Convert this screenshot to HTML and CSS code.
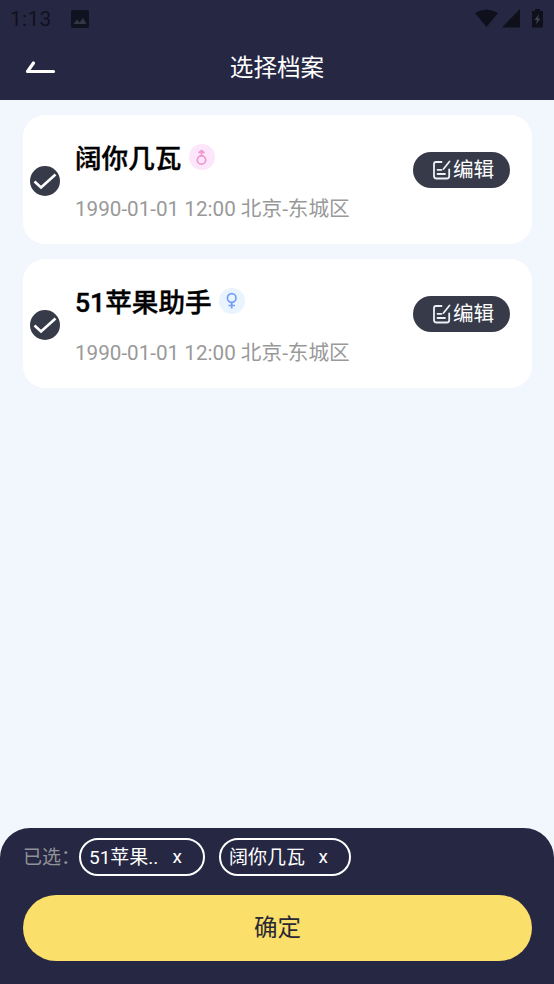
FILE: index.html
```html
<!DOCTYPE html>
<html lang="zh-CN">
<head>
<meta charset="utf-8">
<title>选择档案</title>
<link rel="stylesheet" href="styles.css">
</head>
<body>
<header class="header">
  <div class="status">
    <span class="time">1:13</span>
    <svg class="photo" width="18" height="18" viewBox="0 0 18 18"><rect width="18" height="18" rx="2" fill="#11121f"/><path d="M2.500 14 6 9.500l2.500 3 3.500-4.500L15.500 14z" fill="#343547"/></svg>
    <svg class="signals" width="72" height="20" viewBox="0 0 72 20"><g fill="#0f101c"><path d="M0 4Q11.500-3 23 4L11.500 18z"/><path d="M27 18.500 45 0v18.500z"/><path d="M57 2h3V0h5v2h3v16.500H57z"/></g><path d="m64 5-4.500 6h2.500l-1 4.500 4.500-6H63z" fill="#41424f"/></svg>
  </div>
  <div class="titlebar">
    <svg class="back" width="32" height="16" viewBox="0 0 32 16"><path d="M28.500 11.500H2.500L8.500 3" fill="none" stroke="#fff" stroke-width="3.200" stroke-linecap="round" stroke-linejoin="round"/></svg>
    <h1 class="title">选择档案</h1>
  </div>
</header>
<main class="list">
  <article class="card">
    <svg class="check" width="30" height="30" viewBox="0 0 30 30"><circle cx="15" cy="15" r="15" fill="#373a48"/><path d="m4.500 15.500 6.500 6L25.500 8.500" fill="none" stroke="#fff" stroke-width="2.600"/></svg>
    <div class="info">
      <div class="name-row"><h2 class="name">阔你几瓦</h2>
        <svg class="gender" width="26" height="26" viewBox="0 0 26 26"><circle cx="13" cy="13" r="13" fill="#fde6fb"/><g fill="none" stroke="#ee97cc" stroke-width="1.700"><circle cx="12.500" cy="16" r="4.200"/><path d="M12.500 11.800V6.500M9.600 9l2.900-2.500L15.400 9"/></g></svg>
      </div>
      <p class="birth">1990-01-01 12:00 北京-东城区</p>
    </div>
    <button class="edit"><svg width="18" height="20" viewBox="0 0 18 20"><g fill="none" stroke="#edf1f7" stroke-width="1.800" stroke-linecap="round"><path d="M8.500 2H3Q1 2 1 4V16q0 2.500 2.500 2.500H14q2.200 0 2.200-2.200V9.500M16.500 1.500 10.500 9M4.500 9.800H8.500M4.500 14H12"/></g></svg>编辑</button>
  </article>
  <article class="card">
    <svg class="check" width="30" height="30" viewBox="0 0 30 30"><circle cx="15" cy="15" r="15" fill="#373a48"/><path d="m4.500 15.500 6.500 6L25.500 8.500" fill="none" stroke="#fff" stroke-width="2.600"/></svg>
    <div class="info">
      <div class="name-row"><h2 class="name">51苹果助手</h2>
        <svg class="gender" width="26" height="26" viewBox="0 0 26 26"><circle cx="13" cy="13" r="13" fill="#e9f4ff"/><g fill="none" stroke="#749ff4" stroke-width="1.700"><circle cx="12.700" cy="10" r="4.300"/><path d="M12.700 14.300V20.500M9.500 17.500h6.400"/></g></svg>
      </div>
      <p class="birth">1990-01-01 12:00 北京-东城区</p>
    </div>
    <button class="edit"><svg width="18" height="20" viewBox="0 0 18 20"><g fill="none" stroke="#edf1f7" stroke-width="1.800" stroke-linecap="round"><path d="M8.500 2H3Q1 2 1 4V16q0 2.500 2.500 2.500H14q2.200 0 2.200-2.200V9.500M16.500 1.500 10.500 9M4.500 9.800H8.500M4.500 14H12"/></g></svg>编辑</button>
  </article>
</main>
<footer class="footer">
  <div class="selected">
    <span class="label">已选：</span>
    <span class="chip chip-first"><span>51苹果..</span><span class="remove">x</span></span>
    <span class="chip"><span>阔你几瓦</span><span class="remove">x</span></span>
  </div>
  <button class="confirm">确定</button>
</footer>
</body>
</html>
```
FILE: styles.css
```css
* { box-sizing: border-box; }
body {
  margin: 0;
  height: 984px;
  display: flex;
  flex-direction: column;
  overflow: hidden;
  background: #f2f7fe;
  font-family: Roboto, "Noto Sans CJK SC", sans-serif;
}
h1, h2, p { margin: 0; font-weight: 400; }
button { border: 0; padding: 0; font: inherit; }
svg { flex: none; display: block; }
.header { height: 100px; background: #262742; }
.status { height: 38px; padding: 0 10px; display: flex; align-items: center; }
.time { width: 61px; font-size: 21px; line-height: 38px; color: #11121f; letter-spacing: .3px; }
.signals { margin-left: auto; margin-right: -3px; }
.titlebar { height: 60px; display: grid; grid-template-columns: 80px 1fr 80px; align-items: center; }
.back { margin: 0 0 0 25px; }
.title { text-align: center; font-size: 23.6px; line-height: 34px; color: #fff; }
.list { flex: 1; padding: 15px 22px 0 23px; display: flex; flex-direction: column; gap: 15px; }
.card {
  height: 129px;
  padding: 0 22px 0 7px;
  border-radius: 22px;
  background: #fff;
  display: flex;
  align-items: flex-start;
}
.check { margin-top: 51px; }
.info { flex: 1; padding: 24px 0 0 15px; }
.name-row { display: flex; align-items: center; gap: 7.5px; height: 40px; }
.gender { margin-top: -4px; }
.name { font-size: 26.6px; font-weight: 500; line-height: 40px; color: #000; -webkit-text-stroke: .4px #000; }
.birth { margin-top: 15px; font-size: 20.65px; line-height: 30px; color: #999; white-space: nowrap; }
.edit {
  width: 97px;
  height: 36px;
  margin-top: 37px;
  border-radius: 18px;
  background: #373a48;
  color: #fff;
  font-size: 20.6px;
  line-height: 36px;
  display: flex;
  align-items: center;
  padding-left: 20px;
  gap: 2px;
}
.footer { height: 156px; padding: 10px 22px 0 23px; border-radius: 30px 30px 0 0; background: #262742; }
.selected { display: flex; height: 38px; align-items: center; font-size: 19px; }
.label { width: 56px; padding-bottom: 3px; color: #929299; white-space: nowrap; }
.chip {
  width: 132px;
  height: 38px;
  padding: 0 21px 3px 8px;
  border: 2px solid #fff;
  border-radius: 19px;
  color: #fff;
  display: flex;
  align-items: center;
  justify-content: space-between;
}
.chip-first { width: 126px; margin-right: 14px; padding-bottom: 4px; }
.remove { padding-top: 2px; }
.confirm {
  width: 100%;
  height: 66px;
  margin-top: 19px;
  padding-bottom: 4px;
  border-radius: 33px;
  background: #fadf6a;
  color: #292833;
  font-size: 23.5px;
}
```
